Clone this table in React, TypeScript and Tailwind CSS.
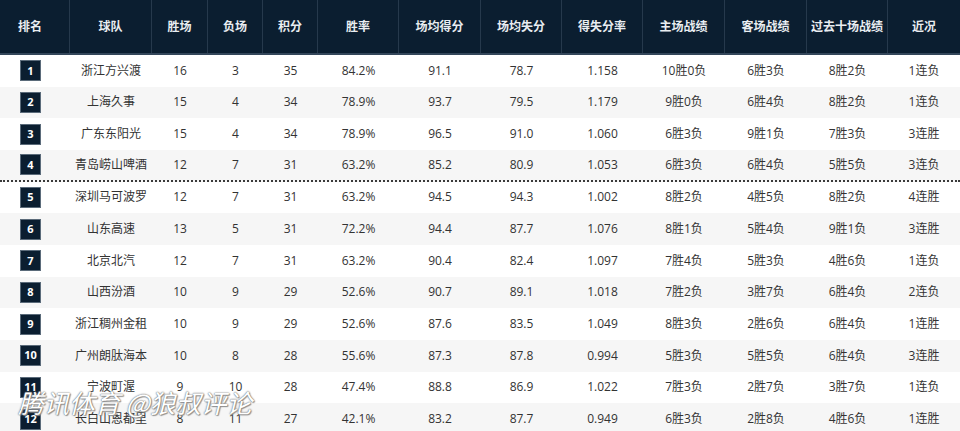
import React from 'react'

const cols = ['排名', '球队', '胜场', '负场', '积分', '胜率', '场均得分', '场均失分', '得失分率', '主场战绩', '客场战绩', '过去十场战绩', '近况']

const rows: string[][] = [
  ['1', '浙江方兴渡', '16', '3', '35', '84.2%', '91.1', '78.7', '1.158', '10胜0负', '6胜3负', '8胜2负', '1连负'],
  ['2', '上海久事', '15', '4', '34', '78.9%', '93.7', '79.5', '1.179', '9胜0负', '6胜4负', '8胜2负', '1连负'],
  ['3', '广东东阳光', '15', '4', '34', '78.9%', '96.5', '91.0', '1.060', '6胜3负', '9胜1负', '7胜3负', '3连胜'],
  ['4', '青岛崂山啤酒', '12', '7', '31', '63.2%', '85.2', '80.9', '1.053', '6胜3负', '6胜4负', '5胜5负', '3连负'],
  ['5', '深圳马可波罗', '12', '7', '31', '63.2%', '94.5', '94.3', '1.002', '8胜2负', '4胜5负', '8胜2负', '4连胜'],
  ['6', '山东高速', '13', '5', '31', '72.2%', '94.4', '87.7', '1.076', '8胜1负', '5胜4负', '9胜1负', '3连胜'],
  ['7', '北京北汽', '12', '7', '31', '63.2%', '90.4', '82.4', '1.097', '7胜4负', '5胜3负', '4胜6负', '1连负'],
  ['8', '山西汾酒', '10', '9', '29', '52.6%', '90.7', '89.1', '1.018', '7胜2负', '3胜7负', '6胜4负', '2连负'],
  ['9', '浙江稠州金租', '10', '9', '29', '52.6%', '87.6', '83.5', '1.049', '8胜3负', '2胜6负', '6胜4负', '1连胜'],
  ['10', '广州朗肽海本', '10', '8', '28', '55.6%', '87.3', '87.8', '0.994', '5胜3负', '5胜5负', '6胜4负', '3连胜'],
  ['11', '宁波町渥', '9', '10', '28', '47.4%', '88.8', '86.9', '1.022', '7胜3负', '2胜7负', '3胜7负', '1连负'],
  ['12', '长白山恩都里', '8', '11', '27', '42.1%', '83.2', '87.7', '0.949', '6胜3负', '2胜8负', '4胜6负', '1连胜'],
]

const grid =
  'grid grid-cols-[70px_82px_56px_55px_55px_81px_82px_81px_81px_82px_82px_81px_72px]'

export default function App(): React.ReactElement {
  return (
    <div className="relative w-[960px] h-[431px] overflow-hidden bg-white font-['Open_Sans','Noto_Sans_CJK_SC',sans-serif] text-[12px] text-[#333]">
      {/* header */}
      <div className={`${grid} h-[55px] bg-[#0b1e30] border-b-2 border-[#33465a]`}>
        {cols.map((c, i) => (
          <div
            key={c}
            className={`flex items-center justify-center font-semibold text-[#e9edf1] ${i === 0 ? 'pr-[9px]' : ''} ${i < cols.length - 1 ? 'border-r border-[#26394c]' : ''}`}
          >
            {c}
          </div>
        ))}
      </div>

      {/* body */}
      {rows.map((r, ri) => (
        <div
          key={r[0]}
          className={`${grid} h-[31.67px] ${ri % 2 === 1 ? 'bg-[#f6f6f6]' : 'bg-white'} ${ri === 3 ? 'border-b-2 border-dotted border-[#3a3a3a]' : ''}`}
        >
          {r.map((v, ci) =>
            ci === 0 ? (
              <div key={ci} className="flex items-center justify-center pr-[9px]">
                <span className="flex h-[19px] w-[19px] items-center justify-center bg-[#0b1e30] text-[11px] font-bold text-white shadow-[0_0_0_1px_#5b6b7a]">
                  {v}
                </span>
              </div>
            ) : (
              <div key={ci} className="flex items-center justify-center whitespace-nowrap">
                {v}
              </div>
            )
          )}
        </div>
      ))}

      {/* watermark */}
      <div className="absolute left-[18px] top-[389px] font-['Noto_Sans_CJK_SC',sans-serif] text-[25.5px] italic leading-none text-white [text-shadow:0_0_1px_#666,0_0_2px_#888,1px_1px_1px_#999]">
        腾讯体育 @狼叔评论
      </div>
    </div>
  )
}
